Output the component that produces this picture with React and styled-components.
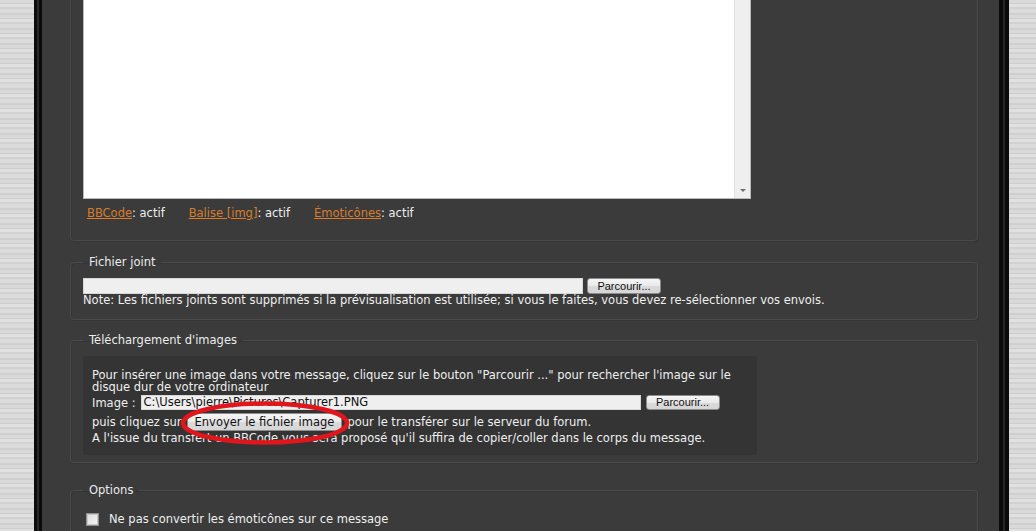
import React from "react";
import styled, { createGlobalStyle } from "styled-components";

const Global = createGlobalStyle`
  html, body {
    margin: 0;
    padding: 0;
    height: 531px;
    overflow: hidden;
  }
  body {
    background: repeating-linear-gradient(
      180deg,
      #d9d9d9 0px, #d9d9d9 3px,
      #cdcdcd 3px, #cdcdcd 4px,
      #e0e0e0 4px, #e0e0e0 7px,
      #d2d2d2 7px, #d2d2d2 9px,
      #dbdbdb 9px, #dbdbdb 13px,
      #cfcfcf 13px, #cfcfcf 15px
    );
    font-family: "DejaVu Sans", Verdana, sans-serif;
    font-size: 11.5px;
    color: #efefef;
  }
`;

const Frame = styled.div`
  margin-left: 34px;
  width: 975px;
  height: 531px;
  overflow: hidden;
  box-sizing: border-box;
  background: #3a3b3a;
  padding: 0 31px 0 36px;
  box-shadow:
    inset 3px 0 0 #0b0b0b,
    inset 5px 0 0 #272827,
    inset 8px 0 0 #0b0b0b,
    inset -4px 0 0 #0b0b0b,
    inset -6px 0 0 #272827,
    inset -10px 0 0 #0b0b0b;
`;

const Panel = styled.fieldset`
  margin: ${(p) => p.$mt}px 0 0 0;
  padding: ${(p) => p.$pt}px 12px ${(p) => p.$pb}px 12px;
  border: 1px solid #4a4b4a;
  border-radius: 4px;
  box-shadow: inset 1px 1px 0 #343534, 1px 1px 0 #343534;
  min-width: 0;
`;

const Legend = styled.legend`
  padding: 0 6px;
  margin-left: 0;
  line-height: 14px;
  font-size: 11.5px;
  color: #ececec;
`;

const Editor = styled.div`
  display: flex;
  width: 668px;
  height: 228px;
  box-sizing: border-box;
  background: #ffffff;
  border: 1px solid #b9b9b9;
`;

const EditorArea = styled.div`
  flex: 1;
`;

const ScrollTrack = styled.div`
  width: 16px;
  background: #efefef;
  border-left: 1px solid #e2e2e2;
  display: flex;
  flex-direction: column;
  justify-content: flex-end;
  align-items: center;
  padding-bottom: 6px;
  box-sizing: border-box;
`;

const ArrowDown = styled.div`
  width: 0;
  height: 0;
  border-left: 3px solid transparent;
  border-right: 3px solid transparent;
  border-top: 3px solid #6e6e6e;
`;

const StatusLine = styled.div`
  display: flex;
  gap: 24px;
  margin-top: 7px;
  padding-left: 4px;
  line-height: 15px;
`;

const Link = styled.a`
  color: #d97b2c;
  text-decoration: underline;
`;

const FileRow = styled.div`
  display: flex;
  align-items: center;
  gap: 4px;
  height: 16px;
`;

const FileInput = styled.div`
  width: 500px;
  flex: none;
  height: ${(p) => p.$h}px;
  box-sizing: border-box;
  background: #efefef;
  border: 1px solid #d8d8d8;
  color: #111;
  font-size: 11.5px;
  line-height: ${(p) => p.$h - 2}px;
  padding-left: 2px;
  white-space: nowrap;
  overflow: hidden;
`;

const Button = styled.div`
  flex: none;
  height: ${(p) => p.$h}px;
  box-sizing: border-box;
  width: ${(p) => (p.$w ? `${p.$w}px` : "auto")};
  padding: 0 ${(p) => p.$px || 0}px;
  border: 1px solid #8c8c8c;
  border-radius: 3px;
  background: linear-gradient(180deg, #f6f6f6 0%, #e9e9e9 50%, #dadada 51%, #d6d6d6 100%);
  color: #111;
  font-family: ${(p) => (p.$sys ? '"Liberation Sans", Arial, sans-serif' : '"DejaVu Sans", Verdana, sans-serif')};
  font-size: ${(p) => (p.$sys ? 11 : 11.5)}px;
  line-height: ${(p) => p.$h - 2}px;
  text-align: center;
  white-space: nowrap;
`;

const Note = styled.div`
  line-height: 13px;
  white-space: nowrap;
`;

const InnerBox = styled.div`
  position: relative;
  width: 674px;
  box-sizing: border-box;
  background: #333433;
  border-radius: 3px;
  padding: 13px 9px 11px 9px;
`;

const Para = styled.div`
  line-height: 12px;
  white-space: nowrap;
  margin-top: ${(p) => p.$mt || 0}px;
`;

const InlineRow = styled.div`
  display: flex;
  align-items: center;
  gap: ${(p) => p.$gap || 4}px;
  height: ${(p) => p.$h}px;
  margin-top: ${(p) => p.$mt || 0}px;
  white-space: nowrap;
`;

const Ellipse = styled.svg`
  position: absolute;
  left: 96px;
  top: 44px;
  pointer-events: none;
`;

const CheckRow = styled.label`
  display: flex;
  align-items: center;
  gap: 10px;
  padding-left: 3px;
  line-height: 15px;
`;

const Check = styled.span`
  width: 13px;
  height: 13px;
  box-sizing: border-box;
  border: 1px solid #8e8f8e;
  background: linear-gradient(135deg, #dcdcdc 0%, #f5f5f5 100%);
  box-shadow: inset 0 0 0 1px #c8c8c8;
`;

export default function App() {
  return (
    <>
      <Global />
      <Frame>
        <Panel $mt={-40} $pt={10} $pb={19}>
          <Editor>
            <EditorArea />
            <ScrollTrack>
              <ArrowDown />
            </ScrollTrack>
          </Editor>
          <StatusLine>
            <span>
              <Link>BBCode</Link>: actif
            </span>
            <span>
              <Link>Balise [img]</Link>: actif
            </span>
            <span>
              <Link>Émoticônes</Link>: actif
            </span>
          </StatusLine>
        </Panel>

        <Panel $mt={14} $pt={9} $pb={12}>
          <Legend>Fichier joint</Legend>
          <FileRow>
            <FileInput $h={16} />
            <Button $h={16} $w={74} $sys>
              Parcourir...
            </Button>
          </FileRow>
          <Note>
            Note: Les fichiers joints sont supprimés si la prévisualisation est utilisée; si vous le faites, vous devez
            re-sélectionner vos envois.
          </Note>
        </Panel>

        <Panel $mt={13} $pt={9} $pb={7}>
          <Legend>Téléchargement d'images</Legend>
          <InnerBox>
            <Para>
              Pour insérer une image dans votre message, cliquez sur le bouton "Parcourir ..." pour rechercher l'image sur le
            </Para>
            <Para>disque dur de votre ordinateur</Para>
            <InlineRow $h={17} $mt={1} $gap={5}>
              <span>Image :</span>
              <FileInput $h={15}>C:\Users\pierre\Pictures\Capturer1.PNG</FileInput>
              <Button $h={15} $w={74} $sys>
                Parcourir...
              </Button>
            </InlineRow>
            <InlineRow $h={18} $mt={2} $gap={5}>
              <span>puis cliquez sur</span>
              <Button $h={18} $px={7}>
                Envoyer le fichier image
              </Button>
              <span>pour le transférer sur le serveur du forum.</span>
            </InlineRow>
            <Para $mt={1}>
              A l'issue du transfert un BBCode vous sera proposé qu'il suffira de copier/coller dans le corps du message.
            </Para>
            <Ellipse width="172" height="46" viewBox="0 0 172 46">
              <ellipse cx="86" cy="23" rx="82" ry="19.5" fill="none" stroke="#e0161c" strokeWidth="4.5" />
            </Ellipse>
          </InnerBox>
        </Panel>

        <Panel $mt={20} $pt={15} $pb={20}>
          <Legend>Options</Legend>
          <CheckRow>
            <Check />
            <span>Ne pas convertir les émoticônes sur ce message</span>
          </CheckRow>
        </Panel>
      </Frame>
    </>
  );
}
